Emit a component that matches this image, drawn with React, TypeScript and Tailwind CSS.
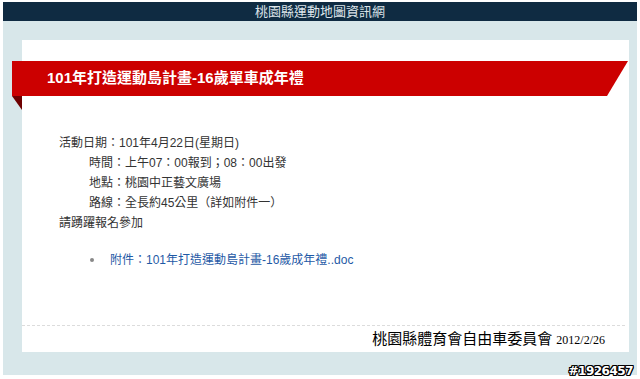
import React from "react";

export default function App() {
  const cjk = "font-['Liberation_Sans','Noto_Sans_CJK_TC',sans-serif]";
  return (
    <div className={`relative w-[640px] h-[379px] bg-white pt-[2px] px-[3px] ${cjk}`}>
      <div className="h-[19px] bg-[#0f2b42] flex items-center justify-center text-[13px] leading-none text-[#dde4ea]">
        桃園縣運動地圖資訊網
      </div>
      <div className="h-[354px] bg-[#d8e7ea] pl-[19px] pr-[8px] pt-[19px] pb-[23px]">
        <div className="h-full bg-white flex flex-col">
          <div className="relative mt-[21px] -ml-[10px] w-[616px]">
            <div className="h-[35px] bg-[#cc0000] flex items-center pl-[35px] text-white font-bold text-[15px] [clip-path:polygon(0_0,100%_0,calc(100%-21px)_100%,0_100%)]">
              101年打造運動島計畫-16歲單車成年禮
            </div>
            <div className="absolute left-0 top-full w-[10px] h-[14px] bg-[#6e0000] [clip-path:polygon(0_0,100%_0,100%_100%)]" />
          </div>
          <div className="mt-[37px] pl-[37px] text-[12px] leading-[20px] text-[#333]">
            <div>活動日期：101年4月22日(星期日)</div>
            <div className="pl-[30px]">時間：上午07：00報到；08：00出發</div>
            <div className="pl-[30px]">地點：桃園中正藝文廣場</div>
            <div className="pl-[30px]">路線：全長約45公里（詳如附件一）</div>
            <div>請踴躍報名參加</div>
          </div>
          <div className="mt-[17px] pl-[68px] flex items-center h-[20px] text-[12px]">
            <span className="w-[4px] h-[4px] rounded-full bg-[#888] mr-[16px]" />
            <span className="text-[#1f5aa6]">附件：101年打造運動島計畫-16歲成年禮..doc</span>
          </div>
          <div className="mt-auto h-[27px] border-t border-dashed border-[#dcdcdc] mr-[4px] flex justify-end items-start pt-[3px] pr-[20px] text-black">
            <span className="text-[15px] leading-[20px]">桃園縣體育會自由車委員會</span>
            <span className="ml-[4px] text-[12px] leading-[22px] font-['Liberation_Serif',serif]">2012/2/26</span>
          </div>
        </div>
      </div>
      <div className="absolute right-[7px] bottom-[2px] text-[12px] leading-none font-bold text-white font-['DejaVu_Sans',sans-serif] tracking-[-0.5px] [text-shadow:1px_0_0_#000,-1px_0_0_#000,0_1px_0_#000,0_-1px_0_#000,1px_1px_0_#000,-1px_-1px_0_#000,1px_-1px_0_#000,-1px_1px_0_#000]">
        #1926457
      </div>
    </div>
  );
}
